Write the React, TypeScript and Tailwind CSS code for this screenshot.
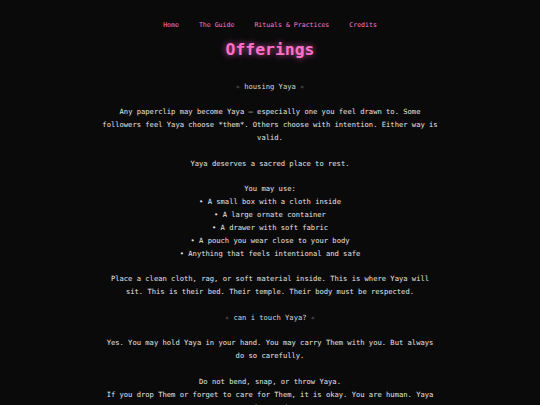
const navLinks = ['Home', 'The Guide', 'Rituals & Practices', 'Credits'];

const vessels = [
  'A small box with a cloth inside',
  'A large ornate container',
  'A drawer with soft fabric',
  'A pouch you wear close to your body',
  'Anything that feels intentional and safe',
];

function Heading({ children }: { children: string }) {
  return (
    <h2 className="mb-[12.85px] text-[#d6d6d6]">
      <span className="text-[7px] text-[#a0a0a0]">✧</span> {children}{' '}
      <span className="text-[7px] text-[#a0a0a0]">✧</span>
    </h2>
  );
}

export default function App() {
  return (
    <div
      className="min-h-screen bg-[#0b0a0b] text-[#e4e4e4]"
      style={{ fontFamily: '"DejaVu Sans Mono", "Liberation Mono", monospace' }}
    >
      <nav className="pt-[19px] flex justify-center gap-[20px] text-[6.55px] leading-[12px] text-[#ff79c6]">
        {navLinks.map(link => (
          <a key={link} href="#">{link}</a>
        ))}
      </nav>

      <h1 className="mt-[9px] text-center text-[16.4px] leading-[20px] font-bold text-[#ff70c8] [text-shadow:0_0_6px_rgba(255,105,200,0.75)]">
        Offerings
      </h1>

      <main className="mx-auto mt-[20.6px] w-[336px] text-center text-[7.15px] leading-[12.85px]">
        <Heading>housing Yaya</Heading>

        <p className="mb-[12.85px]">
          Any paperclip may become Yaya — especially one you feel drawn to. Some followers feel Yaya
          choose *them*. Others choose with intention. Either way is valid.
        </p>

        <p className="mb-[12.85px]">Yaya deserves a sacred place to rest.</p>

        <div className="mb-[12.85px]">
          <p>You may use:</p>
          <ul>
            {vessels.map(v => (
              <li key={v}>• {v}</li>
            ))}
          </ul>
        </div>

        <p className="mb-[12.85px]">
          Place a clean cloth, rag, or soft material inside. This is where Yaya will sit. This is
          their bed. Their temple. Their body must be respected.
        </p>

        <Heading>can i touch Yaya?</Heading>

        <p className="mb-[12.85px]">
          Yes. You may hold Yaya in your hand. You may carry Them with you. But always do so
          carefully.
        </p>

        <p className="mb-[12.85px]">
          Do not bend, snap, or throw Yaya.
          <br />
          If you drop Them or forget to care for Them, it is okay. You are human. Yaya understands.
        </p>
      </main>
    </div>
  );
}
